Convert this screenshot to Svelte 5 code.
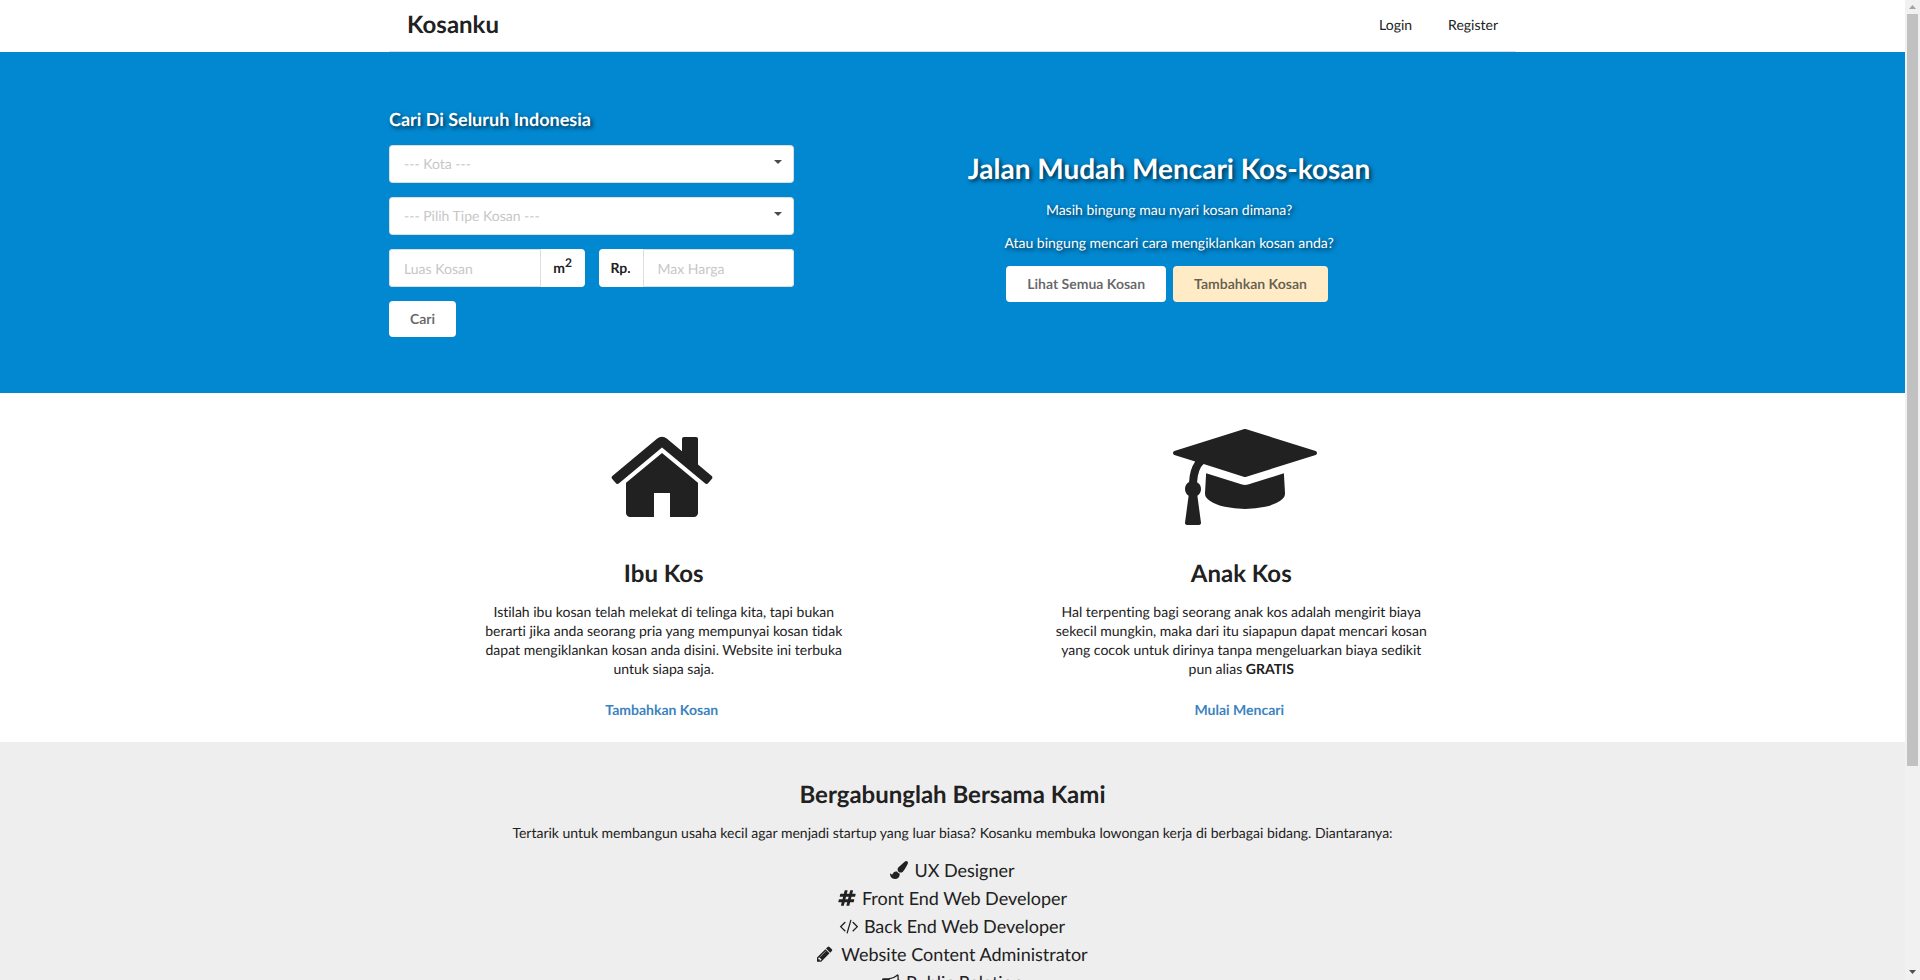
<script>
  const jobs = [
    {
      title: 'UX Designer',
      box: '0 0 1792 1792',
      path: 'M1615 0q70 0 122.5 46.5t52.5 116.5q0 63-45 151-332 629-465 752-97 91-218 91-126 0-216.5-92.5t-90.5-219.5q0-128 92-212l638-579q59-54 130-54zm-909 1034q39 76 106.5 130t150.5 76l1 71q4 213-129.5 347t-348.5 134q-123 0-218-46.5t-152.5-127.5-86.5-183-29-220q7 5 41 30t62 44.5 59 36.5 46 17q41 0 55-37 25-66 57.5-112.5t69.5-76 88-47.5 103-25.5 125-10.5z'
    },
    {
      title: 'Front End Web Developer',
      box: '0 0 1792 1792',
      path: 'M991 1024l64-256h-254l-64 256h254zm768-504l-56 224q-7 24-31 24h-327l-64 256h311q15 0 25 12 10 14 6 28l-56 224q-5 24-31 24h-327l-81 328q-7 24-31 24h-224q-16 0-26-12-9-12-6-28l78-312h-254l-81 328q-7 24-31 24h-225q-15 0-25-12-9-12-6-28l78-312h-311q-15 0-25-12-9-12-6-28l56-224q7-24 31-24h327l64-256h-311q-15 0-25-12-10-14-6-28l56-224q5-24 31-24h327l81-328q7-24 32-24h224q15 0 25 12 9 12 6 28l-78 312h254l81-328q7-24 32-24h224q15 0 25 12 9 12 6 28l-78 312h311q15 0 25 12 9 12 6 28z'
    },
    {
      title: 'Back End Web Developer',
      box: '0 0 1792 1792',
      path: 'M553 1399l-50 50q-10 10-23 10t-23-10l-466-466q-10-10-10-23t10-23l466-466q10-10 23-10t23 10l50 50q10 10 10 23t-10 23l-393 393 393 393q10 10 10 23t-10 23zm591-1067l-373 1291q-4 13-15.5 19.5t-23.5 2.5l-62-17q-13-4-19.5-15.5t-2.5-24.5l373-1291q4-13 15.5-19.5t23.5-2.5l62 17q13 4 19.5 15.5t2.5 24.5zm657 651l-466 466q-10 10-23 10t-23-10l-50-50q-10-10-10-23t10-23l393-393-393-393q-10-10-10-23t10-23l50-50q10-10 23-10t23 10l466 466q10 10 10 23t-10 23z'
    },
    {
      title: 'Website Content Administrator',
      box: '128 0 1792 1792',
      path: 'M491 1536l91-91-235-235-91 91v107h128v128h107zm523-928q0-22-22-22-10 0-17 7l-542 542q-7 7-7 17 0 22 22 22 10 0 17-7l542-542q7-7 7-17zm-54-192l416 416-832 832h-416v-416zm683 96q0 53-37 90l-166 166-416-416 166-165q36-38 90-38 53 0 91 38l235 234q37 39 37 91z'
    },
    {
      title: 'Public Relation',
      box: '0 0 1792 1792',
      path: 'M1664 640q53 0 90.5 37.5t37.5 90.5-37.5 90.5-90.5 37.5v384q0 52-38 90t-90 38q-417-347-812-380-58 19-91 66t-31 100.5 40 92.5q-20 33-23 65.5t6 58 33.5 55 48 50 61.5 50.5q-29 58-111.5 83t-168.5 11.5-132-55.5q-7-23-29.5-87.5t-32-94.5-23-89-15-101 3.5-98.5 22-110.5h-122q-66 0-113-47t-47-113v-192q0-66 47-113t113-47h480q435 0 896-384 52 0 90 38t38 90v384zm-128 604v-954q-394 302-768 343v270q377 42 768 341z'
    }
  ];
</script>

<div class="shell">
  <div class="page">
    <header>
      <nav class="container">
        <a class="brand" href="#home">Kosanku</a>
        <a href="#login">Login</a>
        <a href="#register">Register</a>
      </nav>
    </header>

    <section class="hero">
      <div class="grid search-grid">
        <form onsubmit={(e) => e.preventDefault()}>
          <h3>Cari Di Seluruh Indonesia</h3>
          <div class="select">
            <select aria-label="Kota">
              <option>--- Kota ---</option>
            </select>
            <svg viewBox="0 0 8 4" aria-hidden="true"><path d="M0 0h8L4 4z" /></svg>
          </div>
          <div class="select">
            <select aria-label="Tipe Kosan">
              <option>--- Pilih Tipe Kosan ---</option>
            </select>
            <svg viewBox="0 0 8 4" aria-hidden="true"><path d="M0 0h8L4 4z" /></svg>
          </div>
          <div class="pair">
            <div class="field">
              <input id="luas" type="text" placeholder="Luas Kosan" />
              <label class="end" for="luas">m<sup>2</sup></label>
            </div>
            <div class="field">
              <label class="start" for="harga">Rp.</label>
              <input id="harga" type="text" placeholder="Max Harga" />
            </div>
          </div>
          <button class="button" type="submit">Cari</button>
        </form>

        <div class="pitch">
          <h1>Jalan Mudah Mencari Kos-kosan</h1>
          <p>Masih bingung mau nyari kosan dimana?</p>
          <p>Atau bingung mencari cara mengiklankan kosan anda?</p>
          <div class="actions">
            <button class="button" type="button">Lihat Semua Kosan</button>
            <button class="button cream" type="button">Tambahkan Kosan</button>
          </div>
        </div>
      </div>
    </section>

    <section class="features">
      <div class="grid halves">
        <article>
          <div class="picture">
            <svg width="112" height="112" viewBox="0 0 1792 1792" aria-hidden="true">
              <path d="M1472 992v480q0 26-19 45t-45 19h-384v-384h-256v384h-384q-26 0-45-19t-19-45v-480q0-1 .5-3t.5-3l575-474 575 474q1 2 1 6zm223-69l-62 74q-8 9-21 11h-3q-13 0-21-7l-692-577-692 577q-12 8-24 7-13-2-21-11l-62-74q-8-10-7-23.5t11-21.5l719-599q32-26 76-26t76 26l244 204v-195q0-14 9-23t23-9h192q14 0 23 9t9 23v408l219 182q10 8 11 21.5t-7 23.5z" />
            </svg>
          </div>
          <h2>Ibu Kos</h2>
          <p>Istilah ibu kosan telah melekat di telinga kita, tapi bukan berarti jika anda seorang pria yang mempunyai kosan tidak dapat mengiklankan kosan anda disini. Website ini terbuka untuk siapa saja.</p>
          <a href="#tambah">Tambahkan Kosan</a>
        </article>
        <article>
          <div class="picture">
            <svg width="144" height="112" viewBox="0 0 2304 1792" aria-hidden="true">
              <path d="M1774 836l18 316q4 69-82 128t-235 93.5-323 34.5-323-34.5-235-93.5-82-128l18-316 574 181q22 7 48 7t48-7zm530-324q0 23-22 31l-1120 352q-4 1-10 1t-10-1l-652-206q-43 34-71 111.5t-34 178.5q63 36 63 109 0 69-58 107l58 433q2 14-8 25-9 11-24 11h-192q-15 0-24-11-10-11-8-25l58-433q-58-38-58-107 0-73 65-111 11-207 98-330l-333-104q-22-8-22-31t22-31l1120-352q4-1 10-1t10 1l1120 352q22 8 22 31z" />
            </svg>
          </div>
          <h2>Anak Kos</h2>
          <p>Hal terpenting bagi seorang anak kos adalah mengirit biaya sekecil mungkin, maka dari itu siapapun dapat mencari kosan yang cocok untuk dirinya tanpa mengeluarkan biaya sedikit pun alias <strong>GRATIS</strong></p>
          <a href="#cari">Mulai Mencari</a>
        </article>
      </div>
    </section>

    <section class="join">
      <h2>Bergabunglah Bersama Kami</h2>
      <p>Tertarik untuk membangun usaha kecil agar menjadi startup yang luar biasa? Kosanku membuka lowongan kerja di berbagai bidang. Diantaranya:</p>
      <ul>
        {#each jobs as job}
          <li>
            <svg width="18" height="18" viewBox={job.box} aria-hidden="true"><path d={job.path} /></svg>
            {job.title}
          </li>
        {/each}
      </ul>
    </section>
  </div>

  <div class="scrollbar" aria-hidden="true">
    <svg width="15" height="14" viewBox="0 0 15 14"><path fill="#a3a3a3" d="M4 9h7L7.500 5z" /></svg>
    <div class="track"><div class="thumb"></div></div>
    <svg width="15" height="14" viewBox="0 0 15 14"><path fill="#505050" d="M4 4h7L7.500 8z" /></svg>
  </div>
</div>

<style>
  :global(body) {
    margin: 0;
    font: 14px/20px Lato, "Liberation Sans", sans-serif;
    font-variant-ligatures: none;
    text-rendering: geometricPrecision;
    color: #212121;
    background: #fff;
  }

  * {
    box-sizing: border-box;
  }

  h1, h2, h3, p, ul {
    margin: 0;
  }

  a {
    color: inherit;
    text-decoration: none;
  }

  .shell {
    display: flex;
    height: 100vh;
  }

  .page {
    flex: 1;
    min-width: 0;
    overflow-y: auto;
    scrollbar-width: none;
  }

  .container {
    max-width: 1127px;
    margin: 0 auto;
  }

  .grid {
    display: grid;
    max-width: 1155px;
    margin: 0 auto;
  }

  nav {
    display: flex;
    align-items: center;
    gap: 36px;
    height: 52px;
    padding: 0 18px 2px;
    border-bottom: 1px solid #d4e0e8;
  }

  .brand {
    margin-right: auto;
    font-size: 24px;
    line-height: 32px;
    font-weight: 700;
  }

  .hero {
    padding: 56px 0;
    background: #0288d1;
  }

  .search-grid {
    grid-template-columns: 6fr 10fr;
  }

  form {
    display: flex;
    flex-direction: column;
    align-items: stretch;
    gap: 14px;
    padding: 0 14px;
  }

  h1, h3, .pitch p {
    color: #fff;
    text-shadow: 2px 2px 4px rgba(0, 0, 0, 0.7);
  }

  h3 {
    font-size: 18px;
    line-height: 23px;
  }

  .select {
    display: grid;
    position: relative;
  }

  .select svg {
    position: absolute;
    right: 12px;
    top: 15px;
    width: 8px;
    height: 4px;
    fill: #4a4a4a;
    pointer-events: none;
  }

  select, input {
    width: 100%;
    min-width: 0;
    height: 38px;
    padding: 0 14px;
    border: 1px solid rgba(34, 36, 38, 0.15);
    border-radius: 4px;
    background: #fff;
    font: inherit;
    text-rendering: inherit;
    color: #212121;
    appearance: none;
    outline: none;
  }

  select {
    color: #c7c7c7;
  }

  input::placeholder {
    color: #c7c7c7;
    opacity: 1;
  }

  .pair {
    display: grid;
    grid-template-columns: 1fr 1fr;
    gap: 14px;
  }

  .field {
    display: flex;
    background: #fff;
    border-radius: 4px;
  }

  label {
    flex: 0 0 44px;
    height: 38px;
    line-height: 38px;
    text-align: center;
    font-weight: 700;
  }

  label sup {
    font-size: 12px;
    line-height: 0;
    vertical-align: super;
  }

  .field input:first-child {
    border-radius: 4px 0 0 4px;
  }

  .field input:last-child {
    border-radius: 0 4px 4px 0;
  }

  .button {
    align-self: flex-start;
    height: 36px;
    padding: 0 21px;
    border: 0;
    border-radius: 4px;
    background: #fff;
    color: rgba(0, 0, 0, 0.6);
    font: inherit;
    text-rendering: inherit;
    font-weight: 700;
    cursor: pointer;
  }

  .cream {
    background: #ffecc7;
  }

  .pitch {
    display: flex;
    flex-direction: column;
    align-items: center;
    justify-content: center;
    padding: 6px 14px 0;
    text-align: center;
  }

  h1 {
    font-size: 28px;
    line-height: 36px;
    margin-bottom: 14px;
  }

  .pitch p {
    margin-bottom: 13px;
  }

  .actions {
    display: flex;
    gap: 7px;
    margin-right: 4px;
  }

  .features {
    padding: 28px 0 22px;
  }

  .halves {
    grid-template-columns: 1fr 1fr;
  }

  article {
    display: flex;
    flex-direction: column;
    align-items: center;
    text-align: center;
  }

  .picture {
    width: 132px;
    height: 112px;
    margin: 0 4px 25px 0;
    text-align: center;
    white-space: nowrap;
  }

  svg {
    fill: #212121;
    overflow: visible;
  }

  h2 {
    font-size: 24px;
    line-height: 31px;
    margin-bottom: 13px;
  }

  article p {
    max-width: 375px;
    line-height: 19px;
    margin-bottom: 22px;
  }

  article a {
    margin-right: 4px;
    font-weight: 700;
    color: #3b83c0;
  }

  .join {
    padding: 37px 14px 28px;
    background: #eee;
    text-align: center;
  }

  ul {
    margin-top: 13px;
    padding: 0;
    list-style: none;
    font-size: 18px;
    line-height: 28px;
  }

  li {
    display: flex;
    justify-content: center;
    align-items: center;
    gap: 6px;
  }

  .scrollbar {
    display: flex;
    flex-direction: column;
    flex: 0 0 15px;
    background: #f1f1f1;
  }

  .track {
    flex: 1;
    padding: 0 2px;
  }

  .thumb {
    height: 79%;
    background: #c1c1c1;
  }
</style>
